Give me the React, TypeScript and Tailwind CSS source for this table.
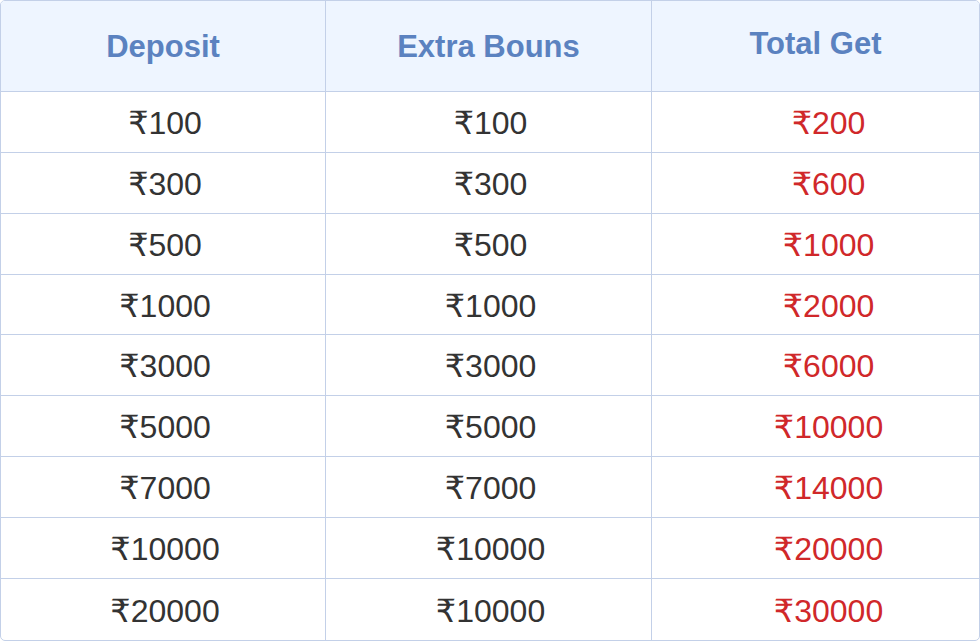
import React from "react";

const rows: [string, string, string][] = [
  ["₹100", "₹100", "₹200"],
  ["₹300", "₹300", "₹600"],
  ["₹500", "₹500", "₹1000"],
  ["₹1000", "₹1000", "₹2000"],
  ["₹3000", "₹3000", "₹6000"],
  ["₹5000", "₹5000", "₹10000"],
  ["₹7000", "₹7000", "₹14000"],
  ["₹10000", "₹10000", "₹20000"],
  ["₹20000", "₹10000", "₹30000"],
];

export default function App() {
  return (
    <div
      className="w-[980px] h-[641px] bg-white"
      style={{ fontFamily: '"Liberation Sans", "DejaVu Sans", Arial, sans-serif' }}
    >
      <div className="h-full border border-[#c3d0e8] rounded-[5px] overflow-hidden flex flex-col">
        <div className="grid grid-cols-[325px_326px_1fr] h-[91px] bg-[#eef5ff] border-b border-[#c3d0e8] text-[#5b82c0] text-[31px] font-bold">
          <div className="border-r border-[#c3d0e8] flex items-center justify-center pt-[3px]">Deposit</div>
          <div className="border-r border-[#c3d0e8] flex items-center justify-center pt-[3px]">Extra Bouns</div>
          <div className="flex items-center justify-center pb-[3px]">Total Get</div>
        </div>
        {rows.map((r, i) => (
          <div
            key={i}
            className={
              "grid grid-cols-[325px_326px_1fr] h-[61px] text-[32px] leading-none text-[#333333] " +
              (i < rows.length - 1 ? "border-b border-[#c3d0e8]" : "")
            }
          >
            <div className="border-r border-[#c3d0e8] flex items-center justify-center pl-[4px] pt-[2px]">{r[0]}</div>
            <div className="border-r border-[#c3d0e8] flex items-center justify-center pl-[4px] pt-[2px]">{r[1]}</div>
            <div className="flex items-center justify-center pl-[26px] pt-[2px] text-[#d0282a]">{r[2]}</div>
          </div>
        ))}
      </div>
    </div>
  );
}
